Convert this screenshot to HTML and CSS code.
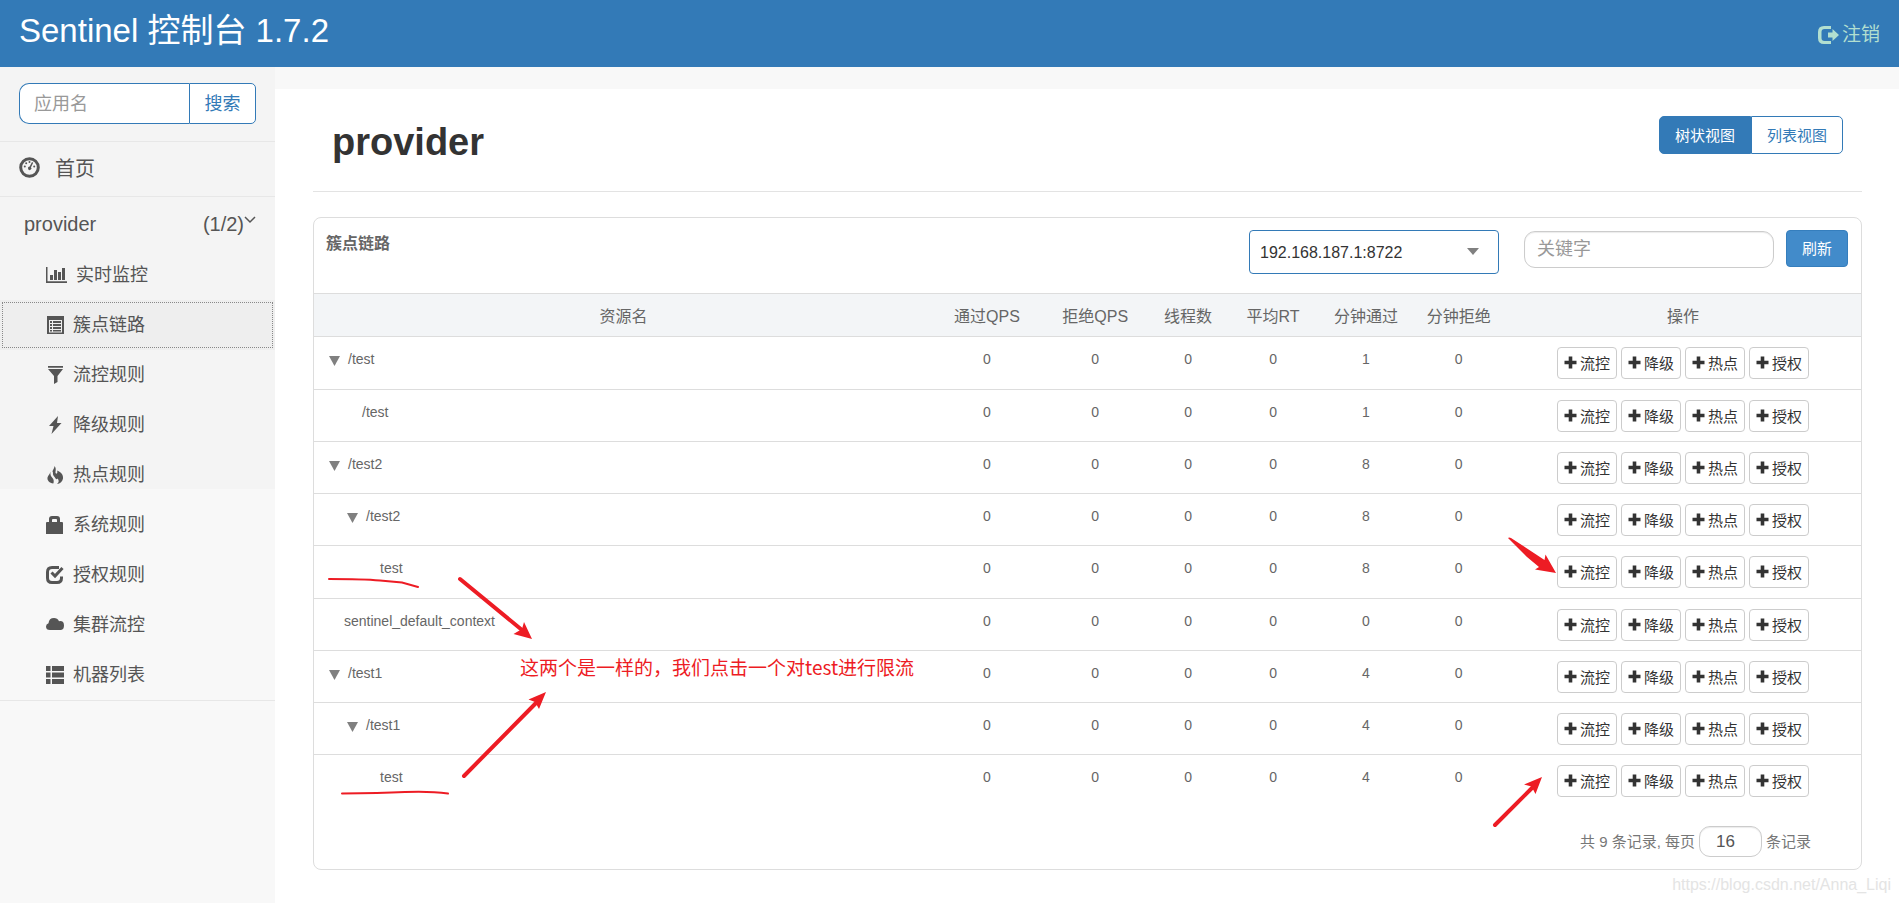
FILE: index.html
```html
<!DOCTYPE html>
<html lang="zh-CN">
<head>
<meta charset="utf-8">
<title>Sentinel 控制台 1.7.2</title>
<link rel="stylesheet" href="styles.css">
</head>
<body>
<svg class="defs" aria-hidden="true">
  <symbol id="plus" viewBox="0 0 13 13"><path d="M4.700 .5h3.600v4.200h4.200v3.600H8.300v4.200H4.700V8.300H.5V4.700h4.200z"/></symbol>
  <symbol id="tri" viewBox="0 0 11 10"><path d="M0 0h11L5.500 10z"/></symbol>
</svg>
<header class="topbar">
  <a class="brand" href="#">Sentinel 控制台 1.7.2</a>
  <a class="logout" href="#">
    <svg width="21" height="18" viewBox="0 0 21 18"><path d="M13 0H6Q0 0 0 6v6q0 6 6 6h7v-3H6.500Q3.500 15 3.500 12V6q0-3 3-3H13z"/><path d="M10 6.500h4.500V3L21 9l-6.500 6v-3.500H10z"/></svg>注销</a>
</header>
<div class="layout">
  <aside class="sidebar">
    <form class="search">
      <input class="search-input" type="text" placeholder="应用名" aria-label="应用名">
      <button class="search-btn" type="button">搜索</button>
    </form>
    <nav>
      <a class="home" href="#">
        <svg width="21" height="21" viewBox="0 0 21 21"><circle cx="10.500" cy="10.500" r="8.800" fill="none" stroke="currentColor" stroke-width="3"/><circle cx="5.800" cy="9.500" r="1"/><circle cx="7.200" cy="6.300" r="1"/><circle cx="10.500" cy="5" r="1"/><circle cx="15.200" cy="9.500" r="1"/><path d="M13 5l1.200.7-2.200 4.500a1.700 1.700 0 1 1-1.300-.6z"/></svg>首页</a>
      <a class="app" href="#"><span>provider</span><span class="count">(1/2)<svg width="12" height="8" viewBox="0 0 12 8"><path d="M1 1l5 5 5-5" fill="none" stroke="currentColor" stroke-width="1.500"/></svg></span></a>
      <ul class="menu">
        <li><a href="#"><svg width="21" height="16" viewBox="0 0 21 16"><path d="M0 0h1.500v14.300H21V16H0zM4 8h3v5H4zM8 3h3v10H8zM12 5h3v8h-3zM16 1h3v12h-3z"/></svg>实时监控</a></li>
        <li><a class="active" href="#"><svg width="18" height="18" viewBox="0 0 18 18"><path fill-rule="evenodd" d="M1 0h17v18H1zM3 4v12.500h13V4z"/><path d="M4 5h2v2H4zM7 5h8v2H7zM4 8h2v2H4zM7 8h8v2H7zM4 11h2v2H4zM7 11h8v2H7zM4 14h2v1.500H4zM7 14h8v1.500H7z"/></svg>簇点链路</a></li>
        <li><a href="#"><svg width="18" height="18" viewBox="0 0 18 18"><path d="M2 0h15v1.800H2zM2 3h15l-5.500 7v6L8 18v-8z"/></svg>流控规则</a></li>
        <li><a href="#"><svg width="18" height="18" viewBox="0 0 18 18"><path d="M12 0L3 10h4.500L5.500 18 15.500 7H11z"/></svg>降级规则</a></li>
        <li><a href="#"><svg width="18" height="18" viewBox="0 0 18 18"><path d="M8.500 0C10.500 2.500 9.500 5 9.500 6.500c0 1.500 1.800 1.500 1.800 0V4.500C15 6 17.500 9 17 12.500c-.4 3-2.800 5.200-6 5.500 2-1.500 2.300-3.500.6-5.500-.6 1-1.800 1-2 0C9.200 11 6.500 10 7 6.500 5.500 5 8.500 3 8.500 0zM4.500 5.500c-.5 3.500.5 5 2 6.500s1.500 4 .8 5.500C3.500 17 1 14.500 1.500 11.500 2 9 4 8.500 4.500 5.500z"/></svg>热点规则</a></li>
        <li><a href="#"><svg width="18" height="18" viewBox="0 0 18 18"><path fill-rule="evenodd" d="M1 6h2V3q0-3 3-3h5q3 0 3 3v3h2q1 0 1 1v11H0V7q0-1 1-1zm5 0h5V3.800Q11 3 10 3H7Q6 3 6 3.800z"/></svg>系统规则</a></li>
        <li><a href="#"><svg width="18" height="18" viewBox="0 0 18 18"><path d="M13 1.500H6Q1.500 1.500 1.500 6v6q0 4.500 4.500 4.500h5q4.500 0 4.500-4.500v-1.500" fill="none" stroke="currentColor" stroke-width="3"/><path d="M5.500 6.500L9 10l7.500-8" fill="none" stroke="currentColor" stroke-width="3"/></svg>授权规则</a></li>
        <li><a href="#"><svg width="18" height="18" viewBox="0 0 18 18"><path d="M4 14q-4 0-4-3.500Q0 8 2.500 7.200 3 2 8 2q3.500 0 5 3.200Q18 4.500 18 9.500q0 4-3 4.500z"/></svg>集群流控</a></li>
        <li><a href="#"><svg width="18" height="18" viewBox="0 0 18 18"><path d="M0 0h4.500v5H0zM6 0h12v5H6zM0 6.500h4.500v5H0zM6 6.500h12v5H6zM0 13h4.500v5H0zM6 13h12v5H6z"/></svg>机器列表</a></li>
      </ul>
    </nav>
  </aside>
  <main class="content">
    <div class="page-head">
      <h1>provider</h1>
      <div class="views"><button class="view on" type="button">树状视图</button><button class="view" type="button">列表视图</button></div>
    </div>
    <section class="panel">
      <div class="panel-head">
        <h2>簇点链路</h2>
        <div class="machine">
          <select aria-label="机器"><option>192.168.187.1:8722</option></select>
          <svg class="caret" width="12" height="7" viewBox="0 0 12 7"><path d="M0 0h12L6 7z"/></svg>
        </div>
        <input class="keyword" type="text" placeholder="关键字" aria-label="关键字">
        <button class="refresh" type="button">刷新</button>
      </div>
      <table>
        <colgroup><col class="c-name"><col class="c-qps"><col class="c-qps"><col class="c-thread"><col class="c-num"><col class="c-num"><col class="c-num"><col class="c-ops"></colgroup>
        <thead><tr><th>资源名</th><th>通过QPS</th><th>拒绝QPS</th><th>线程数</th><th>平均RT</th><th>分钟通过</th><th>分钟拒绝</th><th>操作</th></tr></thead>
        <tbody id="rows"></tbody>
      </table>
      <div class="pager">
        <label for="size">共 9 条记录, 每页</label><input id="size" type="text" value="16"><span>条记录</span>
      </div>
      <svg class="marks marks-left" width="620" height="650" viewBox="314 218 620 650" aria-hidden="true">
        <path class="line" d="M329 579Q363 579 380 580.500T402 582.500L418 587M342 793.500Q380 793 405 792T448 793.500"/>
        <path class="shaft" d="M460 579L522 630M464 776L537 702"/>
        <path d="M532 639l-8-17-2 7-8.500 5zM546 692l-17.500 7.500 6.500 2.500 4 7z"/>
      </svg>
      <svg class="marks marks-right" width="420" height="650" viewBox="1441 218 420 650" aria-hidden="true">
        <path d="M1508 538q1-1 3 0l33.500 22 1-5.500 10.500 18.500-21-3.500 4-2.500-12-10z"/>
        <path class="shaft" d="M1495 825L1533 787"/>
        <path d="M1542 777l-18 7.500 7.500 2 4 7.500z"/>
      </svg>
      <p class="note">这两个是一样的，我们点击一个对test进行限流</p>
    </section>
    <p class="watermark">https://blog.csdn.net/Anna_Liqi</p>
  </main>
</div>
<script src="app.js"></script>
</body>
</html>
```
FILE: app.js
```js
const rows = [
  ["/test", 1, true, 1],
  ["/test", 2, false, 1],
  ["/test2", 1, true, 8],
  ["/test2", 2, true, 8],
  ["test", 3, false, 8],
  ["sentinel_default_context", 1, false, 0],
  ["/test1", 1, true, 4],
  ["/test1", 2, true, 4],
  ["test", 3, false, 4]
];
const actions = ["流控", "降级", "热点", "授权"]
  .map(t => `<button class="op" type="button"><svg width="13" height="13"><use href="#plus"/></svg>${t}</button>`)
  .join("");
document.getElementById("rows").innerHTML = rows.map(([name, level, open, passed]) => {
  const mark = open ? '<svg class="tri" width="11" height="10"><use href="#tri"/></svg>' : "";
  const cells = [0, 0, 0, 0, passed, 0].map(n => `<td>${n}</td>`).join("");
  return `<tr><td class="name level-${level}${open ? " open" : ""}">${mark}${name}</td>${cells}<td class="ops"><div class="op-list">${actions}</div></td></tr>`;
}).join("");
```
FILE: styles.css
```css
* { box-sizing: border-box; }
body {
  margin: 0;
  min-height: 100vh;
  display: flex;
  flex-direction: column;
  background: #f8f8f8;
  color: #333;
  font-family: "Liberation Sans", "Noto Sans CJK SC", sans-serif;
  font-size: 15px;
  line-height: 20px;
}
a { color: inherit; text-decoration: none; }
svg { fill: currentColor; flex: none; }
button, input, select { font-family: inherit; }
input::placeholder { color: #999; opacity: 1; }
.defs { position: absolute; width: 0; height: 0; }

.topbar {
  display: flex;
  justify-content: space-between;
  align-items: flex-start;
  min-height: 67px;
  padding: 0 19px;
  background: #337ab7;
}
.brand { color: #fff; font-size: 33px; line-height: 62px; }
.logout {
  display: flex;
  align-items: center;
  gap: 3px;
  padding-top: 5px;
  color: #b2dfd0;
  font-size: 19px;
  line-height: 60px;
}

.layout { flex: 1; display: flex; }
.sidebar {
  flex: none;
  width: 275px;
  color: #555;
  background: linear-gradient(#f4f4f4, #f4f4f4) no-repeat 0 0 / 100% 422px;
}
.search {
  display: flex;
  height: 74px;
  padding: 16px 19px 17px;
}
.search-input, .search-btn {
  border: 1px solid #337ab7;
  background: #fff;
  font-size: 18px;
  line-height: 24px;
}
.search-input {
  flex: 1;
  min-width: 0;
  padding: 0 14px;
  border-radius: 10px 0 0 10px;
  border-right: 0;
}
.search-btn {
  width: 67px;
  padding: 0;
  border-radius: 0 5px 5px 0;
  color: #337ab7;
}
.home {
  display: flex;
  align-items: center;
  gap: 15px;
  height: 56px;
  padding: 0 19px;
  border: solid #e7e7e7;
  border-width: 1px 0;
  font-size: 20px;
}
.home svg { margin-bottom: 4px; }
.app {
  display: flex;
  justify-content: space-between;
  align-items: center;
  height: 53px;
  padding: 0 19px 0 24px;
  font-size: 20px;
}
.count { display: flex; align-items: flex-start; }
.count svg { margin-top: 2px; }
.menu {
  margin: 0;
  padding: 0;
  list-style: none;
  border-bottom: 1px solid #e7e7e7;
}
.menu a {
  display: flex;
  align-items: center;
  gap: 9px;
  height: 50px;
  padding-left: 46px;
  font-size: 18px;
}
.menu .active {
  background: #eee;
  outline: 1px dotted #888;
  outline-offset: -3px;
}

.content {
  position: relative;
  flex: 1;
  min-width: 0;
  margin-top: 22px;
  padding: 0 37px 33px 38px;
  background: #fff;
}
.page-head {
  display: flex;
  justify-content: space-between;
  align-items: flex-start;
  padding: 27px 19px 28px;
  border-bottom: 1px solid #e3e3e3;
}
h1 { margin: 5px 0 0; font-size: 38px; line-height: 42px; }
.views { display: flex; }
.view {
  width: 92px;
  height: 38px;
  padding: 0 0 2px;
  border: 1px solid #337ab7;
  border-radius: 0 5px 5px 0;
  background: #fff;
  color: #337ab7;
  font-size: 15px;
}
.view.on {
  border-radius: 5px 0 0 5px;
  background: #337ab7;
  color: #fff;
}

.panel {
  position: relative;
  margin-top: 25px;
  border: 1px solid #ddd;
  border-radius: 8px;
}
.panel-head {
  display: flex;
  align-items: flex-start;
  padding: 12px 13px 19px 12px;
}
h2 {
  flex: 1;
  margin: 0;
  color: #666;
  font-size: 16px;
  line-height: 28px;
}
.machine { position: relative; width: 250px; margin-right: 25px; }
.machine select {
  display: block;
  width: 100%;
  height: 44px;
  padding: 0 10px;
  border: 1px solid #337ab7;
  border-radius: 4px;
  background: #fff;
  color: #333;
  font-size: 16px;
  appearance: none;
}
.caret {
  position: absolute;
  top: 18px;
  right: 20px;
  color: #808080;
  pointer-events: none;
}
.keyword {
  width: 250px;
  height: 37px;
  margin: 1px 12px 0 0;
  padding: 0 12px;
  border: 1px solid #ccc;
  border-radius: 11px;
  box-shadow: inset 0 1px 1px rgba(0, 0, 0, .08);
  font-size: 18px;
}
.refresh {
  width: 62px;
  height: 37px;
  padding: 0 0 2px;
  border: 1px solid #357ebd;
  border-radius: 4px;
  background: #428bca;
  color: #fff;
  font-size: 15px;
}

table {
  width: 100%;
  table-layout: fixed;
  border-spacing: 0;
  color: #666;
  text-align: center;
}
.c-name { width: 40%; }
.c-qps { width: 7%; }
.c-thread { width: 5%; }
.c-num { width: 6%; }
.c-ops { width: 23%; }
th {
  height: 43px;
  padding: 3px 0 0;
  border-top: 1px solid #ddd;
  background: #f3f5f7;
  font-size: 16px;
  font-weight: normal;
}
td {
  height: 52px;
  padding: 12px 0 0;
  border-top: 1px solid #ddd;
  font-size: 14px;
  vertical-align: top;
}
tbody tr:nth-child(4n+1) td { height: 53px; }
.name { text-align: left; }
.level-1 { padding-left: 30px; }
.level-2 { padding-left: 48px; }
.level-3 { padding-left: 66px; }
.level-1.open { padding-left: 15px; }
.level-2.open { padding-left: 33px; }
.tri { margin: 0 8px -2px 0; color: #808080; }
.ops { padding-top: 10px; }
.op-list { display: flex; justify-content: center; gap: 4px; }
.op {
  display: flex;
  align-items: center;
  justify-content: center;
  gap: 3px;
  width: 60px;
  height: 32px;
  padding: 0 0 2px;
  border: 1px solid #ccc;
  border-radius: 4px;
  background: #fff;
  color: #333;
  font-size: 15px;
}

.pager {
  display: flex;
  justify-content: flex-end;
  align-items: center;
  gap: 4px;
  padding: 19px 50px 12px;
  color: #777;
}
.pager input {
  width: 63px;
  height: 31px;
  padding: 0 16px;
  border: 1px solid #ccc;
  border-radius: 11px;
  box-shadow: inset 0 1px 1px rgba(0, 0, 0, .08);
  color: #555;
  font-size: 17px;
}

/* Hand-drawn markup over the table */
.marks { position: absolute; top: 0; color: #ed1c24; pointer-events: none; }
.marks-left { left: 0; }
.marks-right { right: 0; }
.line, .shaft { fill: none; stroke: currentColor; stroke-linecap: round; }
.line { stroke-width: 2; }
.shaft { stroke-width: 4; }
.note {
  position: absolute;
  left: 206px;
  top: 435px;
  margin: 0;
  color: #ed1c24;
  font-family: "Noto Sans CJK SC", sans-serif;
  font-size: 19px;
  line-height: 28px;
}
.watermark {
  position: absolute;
  right: 8px;
  bottom: 8px;
  margin: 0;
  color: #e4e4e4;
  font-size: 16px;
}
```
